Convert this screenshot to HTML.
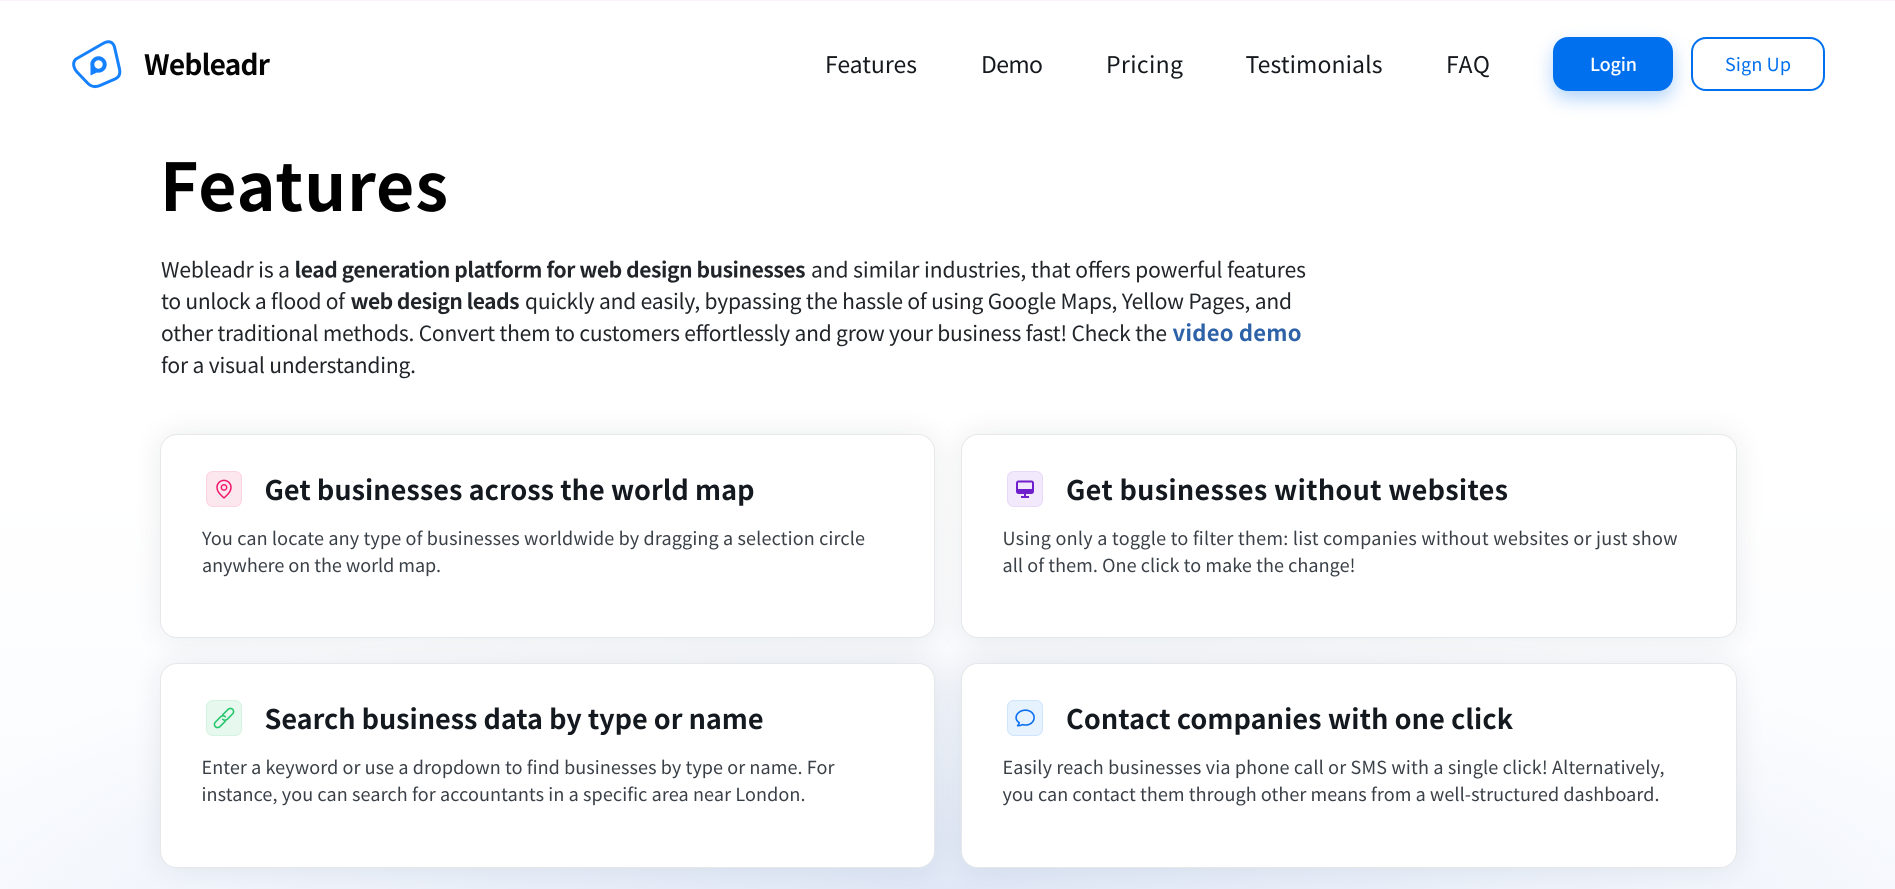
<!DOCTYPE html>
<html lang="en">
<head>
<meta charset="utf-8">
<title>Webleadr Features</title>
<style>
html,body{margin:0;padding:0;width:1895px;height:889px;overflow:hidden;background:#fff}
body{position:relative;font-family:"Noto Sans CJK JP","Liberation Sans",sans-serif;background:radial-gradient(1080px 300px at 948px 895px,rgba(140,170,225,.24),rgba(140,170,225,0) 100%),linear-gradient(180deg,#fff 55%,#f9fbfe 100%)}
.top{position:absolute;left:0;top:0;width:1895px;height:1px;background:#fbf1fb}
.card{position:absolute;background:#fff;border:1px solid #e6e7ea;border-radius:17px;box-shadow:0 0 30px rgba(20,30,50,.085)}
.ib{position:absolute;width:34px;height:34px;border-radius:7px;border:1px solid}
.ib svg{position:absolute;left:-1px;top:-1px;width:36px;height:36px;fill:none}
.btn{position:absolute;top:37px;height:54px;box-sizing:border-box;border-radius:15px}
#t{position:absolute;left:0;top:0;width:1895px;height:889px}
#t text{font-family:"Noto Sans CJK JP","Liberation Sans",sans-serif;text-rendering:geometricPrecision}
.nav{font-size:23px;fill:#15191d}
.h{font-size:21px;fill:#212529}
.hb{font-size:21px;font-weight:700;fill:#212529}
.ct{font-size:27px;font-weight:700;fill:#14191f}
.cb{font-size:18px;fill:#3a4047}
</style>
</head>
<body>
<div class="top"></div>

<div class="btn" style="left:1553px;width:120px;background:#0070ee;box-shadow:0 8px 18px rgba(0,112,238,.3)"></div>
<div class="btn" style="left:1691px;width:134px;background:#fff;border:2px solid #0070ee"></div>

<div class="card" style="left:160px;top:434px;width:773px;height:202px"></div>
<div class="card" style="left:961px;top:434px;width:774px;height:202px"></div>
<div class="card" style="left:160px;top:663px;width:773px;height:203px"></div>
<div class="card" style="left:961px;top:663px;width:774px;height:203px"></div>

<div class="ib" style="left:206px;top:471px;background:#fde7ef;border-color:#fcd3e2">
<svg viewBox="0 0 36 36" stroke="#f01a6c" stroke-width="1.500" stroke-linejoin="round"><path d="M18 27c-4-3.600-7-6.600-7-10.600a7 7 0 0 1 14 0c0 4-3 7-7 10.600z"/><circle cx="18" cy="16.400" r="2.700"/></svg></div>
<div class="ib" style="left:1007px;top:471px;background:#f3e9fd;border-color:#e8d9fa">
<svg viewBox="0 0 36 36" stroke="#6f1fcb"><rect x="10" y="10.500" width="16" height="11.500" rx="1.500" stroke-width="2"/><path d="M9.500 19.500h17" stroke-width="3"/><path d="M18 22.500v3M14 26h8" stroke-width="2"/></svg></div>
<div class="ib" style="left:206px;top:700px;background:#e7f8ee;border-color:#d4f3e0">
<svg viewBox="0 0 36 36" stroke="#27c66c" stroke-width="1.600" stroke-linecap="round"><path d="M16.740 14.740L22.240 9.240A3.200 3.200 0 0 1 26.760 13.760L21.260 19.260A3.200 3.200 0 0 1 16.740 19.260"/><path d="M19.260 21.260L13.760 26.760A3.200 3.200 0 0 1 9.240 22.240L14.740 16.740A3.200 3.200 0 0 1 19.260 16.740"/></svg></div>
<div class="ib" style="left:1007px;top:700px;background:#e7f2ff;border-color:#cfe4fd">
<svg viewBox="0 0 36 36" stroke="#0d70f0" stroke-width="1.600" stroke-linejoin="round"><path d="M18.500 10.200c5 0 8.600 3.300 8.600 7.400s-3.700 7.400-8.600 7.400c-1 0-2-.1-2.900-.4-1.300.8-3 1.200-5 1.100.9-.9 1.500-2 1.600-3-2-1.300-3.100-3.100-3.100-5.100 0-4.100 4.400-7.400 9.400-7.400z"/></svg></div>

<svg id="t" viewBox="0 0 1895 889">
<path d="M76 59L103 43.500C109 40 113 42 114.500 47L119.500 69C120.500 74.500 119 77 115 79L100 85.500C95 87.500 91 86.500 88 83.500L77 72C73 67.500 72.500 62 76 59Z" fill="none" stroke="#1681ff" stroke-width="3" stroke-linejoin="round"/>
<circle cx="98.500" cy="64.500" r="6.200" fill="none" stroke="#1681ff" stroke-width="4"/>
<path d="M90.500 65L90.500 75.500L97 72.500Z" fill="#1681ff"/>
<text x="144" y="75" font-size="28" font-weight="700" fill="#050505" textLength="126">Webleadr</text>

<text class="nav" x="825" y="73" textLength="92">Features</text>
<text class="nav" x="981" y="73" textLength="62">Demo</text>
<text class="nav" x="1106" y="73" textLength="77">Pricing</text>
<text class="nav" x="1245.500" y="73" textLength="137">Testimonials</text>
<text class="nav" x="1446" y="73" textLength="44">FAQ</text>
<text x="1590" y="71" font-size="18" font-weight="500" fill="#fff" textLength="47">Login</text>
<text x="1725" y="71" font-size="18" fill="#0070ee" textLength="66">Sign Up</text>

<text x="160" y="211" font-size="66" font-weight="700" fill="#000" textLength="288">Features</text>

<text class="h" x="161" y="277.500" textLength="129">Webleadr is a</text>
<text class="hb" x="294.500" y="277.500" textLength="511">lead generation platform for web design businesses</text>
<text class="h" x="811" y="277.500" textLength="495">and similar industries, that offers powerful features</text>
<text class="h" x="161" y="309" textLength="184">to unlock a flood of</text>
<text class="hb" x="350.500" y="309" textLength="169">web design leads</text>
<text class="h" x="525" y="309" textLength="767">quickly and easily, bypassing the hassle of using Google Maps, Yellow Pages, and</text>
<text class="h" x="161" y="341" textLength="1006">other traditional methods. Convert them to customers effortlessly and grow your business fast! Check the</text>
<text x="1172.500" y="341" font-size="22" font-weight="700" fill="#2d62a8" textLength="129">video demo</text>
<text class="h" x="161" y="373" textLength="255">for a visual understanding.</text>

<text class="ct" x="264.500" y="500" textLength="490">Get businesses across the world map</text>
<text class="cb" x="202" y="545" textLength="663">You can locate any type of businesses worldwide by dragging a selection circle</text>
<text class="cb" x="202" y="572" textLength="239">anywhere on the world map.</text>

<text class="ct" x="1066" y="500" textLength="442">Get businesses without websites</text>
<text class="cb" x="1002.500" y="545" textLength="675">Using only a toggle to filter them: list companies without websites or just show</text>
<text class="cb" x="1002.500" y="572" textLength="353">all of them. One click to make the change!</text>

<text class="ct" x="264.500" y="729" textLength="499">Search business data by type or name</text>
<text class="cb" x="201.500" y="774" textLength="633">Enter a keyword or use a dropdown to find businesses by type or name. For</text>
<text class="cb" x="201.500" y="801" textLength="604">instance, you can search for accountants in a specific area near London.</text>

<text class="ct" x="1066" y="729" textLength="447">Contact companies with one click</text>
<text class="cb" x="1002.500" y="774" textLength="662">Easily reach businesses via phone call or SMS with a single click! Alternatively,</text>
<text class="cb" x="1002.500" y="801" textLength="657">you can contact them through other means from a well-structured dashboard.</text>
</svg>
</body>
</html>
